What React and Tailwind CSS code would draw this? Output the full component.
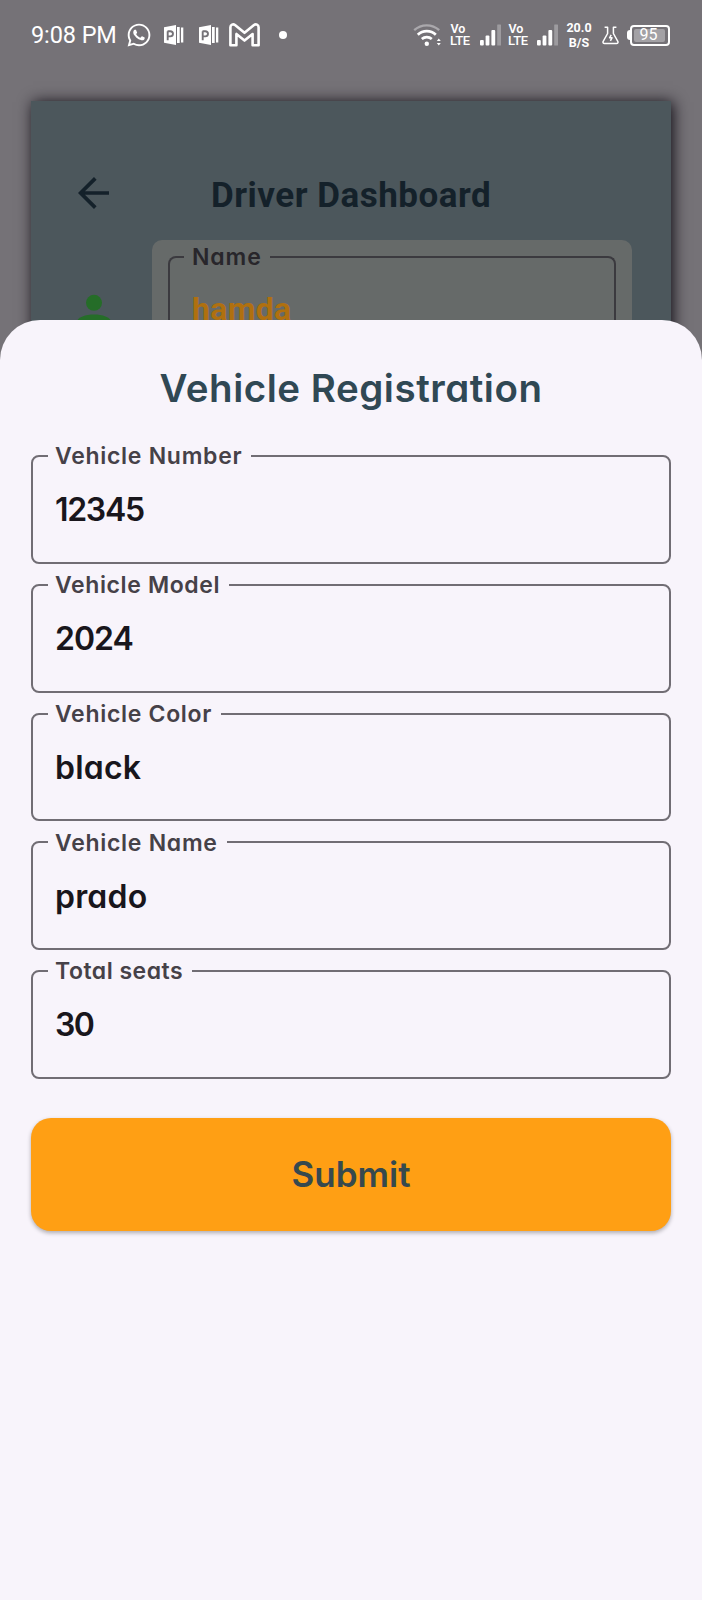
import React from "react";
import { FaWhatsapp } from "react-icons/fa";

const geo = "font-['Inter',sans-serif] [font-feature-settings:'cv11']";

function PublisherIcon() {
  return (
    <svg width="20" height="20" viewBox="0 0 20 20" fill="none" className="shrink-0">
      <path d="M0 2.300 12 0v20L0 17.700z" fill="#fff" />
      <path d="M3.700 15.200V6.200M3.500 6.200h2.700c3.700 0 3.700 5.200 0 5.200H3.900" stroke="#757277" strokeWidth="1.900" />
      <path d="M13 2h2.700v16H13zM17 2.400h2.300v15.200H17z" fill="#fff" />
    </svg>
  );
}

function GmailIcon() {
  return (
    <svg width="31" height="24" viewBox="0 0 31 24" fill="none" className="shrink-0">
      <path
        d="M1.400 22.300V4.200c0-2.600 2.800-3.600 4.600-2.200l9.500 7.800L25 2c1.800-1.400 4.600-.4 4.600 2.200v18.100h-6V11l-8.100 6.600L7.400 11v11.300z"
        stroke="#fff"
        strokeWidth="2.600"
        strokeLinejoin="round"
      />
    </svg>
  );
}

function WifiIcon() {
  return (
    <svg width="29" height="24" viewBox="0 0 29 24" fill="none" className="shrink-0">
      <path d="M1.200 7.200a18.500 18.500 0 0 1 25 0" stroke="#aaa8ac" strokeWidth="2.300" />
      <path d="M4.800 11.800a13 13 0 0 1 18 0" stroke="#fff" strokeWidth="2.700" />
      <path d="M8.800 16a7.600 7.600 0 0 1 10 0" stroke="#fff" strokeWidth="2.700" />
      <circle cx="13.800" cy="20.700" r="2.200" fill="#fff" />
      <path d="m25.800 15.400 2 2.600h-4zM25.800 22.600l2-2.600h-4z" fill="#fff" />
    </svg>
  );
}

function SignalIcon() {
  return (
    <svg width="21" height="22" viewBox="0 0 21 22" className="shrink-0">
      <rect x="0" y="16" width="3.800" height="5.500" rx="1" fill="#fff" />
      <rect x="5.600" y="11.500" width="3.800" height="10" rx="1" fill="#fff" />
      <rect x="11.400" y="6" width="3.800" height="15.500" rx="1" fill="#fff" />
      <rect x="17.200" y="0.500" width="3.800" height="21" rx="0.500" fill="#9d9b9f" />
    </svg>
  );
}

function VoLte() {
  return (
    <div className="flex w-5 shrink-0 flex-col items-center font-['Roboto',sans-serif] font-medium leading-[12px] text-white">
      <span className="-translate-x-0.5 text-[12.500px] font-semibold">Vo</span>
      <span className="text-[13px] tracking-[-0.300px]">LTE</span>
    </div>
  );
}

function FlaskIcon() {
  return (
    <svg width="17" height="19" viewBox="0 0 17 19" fill="none" stroke="#fff" strokeWidth="1.500" strokeLinejoin="round" className="shrink-0">
      <path d="M2.600 1.200h3v6.300L1.200 15.300c-.5 1.100 0 2.200 1.300 2.200h12c1.300 0 1.800-1.100 1.300-2.200L11.400 7.500V1.200h3" />
      <path d="M9.200 8.800 7.600 11.800h2.400l-1.600 3" />
    </svg>
  );
}

function StatusBar() {
  return (
    <header className="flex h-[70px] items-center pl-[31px] text-white">
      <span className="w-[87px] shrink-0 whitespace-nowrap font-['Roboto',sans-serif] text-[23.500px] leading-7 tracking-[-0.100px]">9:08 PM</span>
      <FaWhatsapp className="ml-[9px] h-[26px] w-[24px] shrink-0" />
      <span className="ml-[13px]"><PublisherIcon /></span>
      <span className="ml-[15px]"><PublisherIcon /></span>
      <span className="ml-[10px]"><GmailIcon /></span>
      <span className="ml-[19px] size-2 shrink-0 rounded-full bg-white" />
      <div className="ml-[126px] flex items-center">
        <WifiIcon />
        <div className="ml-2"><VoLte /></div>
        <div className="ml-[10px]"><SignalIcon /></div>
        <div className="ml-[7px]"><VoLte /></div>
        <div className="ml-[9px]"><SignalIcon /></div>
        <div className="ml-[7px] flex w-7 flex-col items-center font-['Roboto',sans-serif] text-[12.500px] font-bold leading-[15px]">
          <span>20.0</span>
          <span>B/S</span>
        </div>
        <div className="ml-[9px]"><FlaskIcon /></div>
        <div className="ml-[8px] flex items-center">
          <span className="h-2.5 w-[3px] rounded-l-sm bg-white" />
          <div className="flex h-[21px] w-10 rounded-[4px] border-2 border-white p-[2px]">
            <span className="flex w-[31px] items-center justify-center rounded-[2px] bg-[#a3a1a5] pr-0.5 font-['Roboto',sans-serif] text-base leading-none">95</span>
          </div>
        </div>
      </div>
    </header>
  );
}

function Dashboard() {
  return (
    <section className="mx-[31px] mt-[31px] h-[260px] bg-[#4c575c] shadow-[2px_1px_14px_0px_rgba(16,12,20,1)]">
      <div className="flex h-[139px] items-start pl-[47px] pt-[76px]">
        <svg width="32" height="32" viewBox="0 0 32 32" fill="none" stroke="#14212a" strokeWidth="3.700" className="shrink-0">
          <path d="M31 16H2.800M17.300 1.400 2.600 16l14.700 14.600" />
        </svg>
        <h2 className="ml-[101px] whitespace-nowrap font-['Roboto',sans-serif] text-[35px] font-bold leading-[38px] tracking-[0.500px] text-[#14212a]">Driver Dashboard</h2>
      </div>
      <div className="flex">
        <div className="w-[121px] shrink-0 pl-[46px] pt-[54px]">
          <svg width="34" height="34" viewBox="0 0 34 34" fill="#256d28">
            <circle cx="17" cy="8.800" r="8" />
            <path d="M0 34v-6c0-5 9-7.500 17-7.500S34 23 34 28v6z" />
          </svg>
        </div>
        <div className="h-[121px] w-[480px] rounded-t-[10px] bg-[#666a69] px-4 pt-4">
          <fieldset className="h-[105px] rounded-t-lg border-2 border-b-0 border-[#3b3a3f] pl-[14px]">
            <legend className="flex h-0.5 w-[86px] items-center pl-2">
              <span className={`${geo} whitespace-nowrap pt-px text-[23px] font-semibold tracking-[0.900px] text-[#28262b]`}>Name</span>
            </legend>
            <p className="pl-2 pt-8 font-['Roboto',sans-serif] text-[32px] font-bold leading-[38px] tracking-[0.300px] text-[#b0700f]">hamda</p>
          </fieldset>
        </div>
      </div>
    </section>
  );
}

const fields = [
  { label: "Vehicle Number", value: "12345", gap: "w-[203px]", track: "tracking-[0.720px]", valueTrack: "tracking-[-1.300px]" },
  { label: "Vehicle Model", value: "2024", gap: "w-[181px]", track: "tracking-[0.620px]", valueTrack: "tracking-[-1px]" },
  { label: "Vehicle Color", value: "black", gap: "w-[173px]", track: "tracking-[0.700px]", valueTrack: "tracking-[0.200px]" },
  { label: "Vehicle Name", value: "prado", gap: "w-[179px]", track: "tracking-[0.720px]", valueTrack: "tracking-[0.200px]" },
  { label: "Total seats", value: "30", gap: "w-[144px]", track: "tracking-[0.500px]", valueTrack: "tracking-[-1.500px]" },
];

function Field({ label, value, gap, track, valueTrack }) {
  return (
    <fieldset className="h-[108.750px] rounded-lg border-2 border-[#716d74] pl-[15px]">
      <legend className={`flex h-0.5 items-center pl-[7px] ${gap}`}>
        <span className={`${geo} ${track} whitespace-nowrap pt-px text-[23px] font-semibold text-[#464148]`}>{label}</span>
      </legend>
      <p className={`${geo} ${valueTrack} pl-[7px] pt-[33.400px] text-[32px] font-[630] leading-10 text-[#19161c]`}>{value}</p>
    </fieldset>
  );
}

export default function App() {
  return (
    <main className="h-[1600px] w-[702px] overflow-hidden bg-[#757277]">
      <StatusBar />
      <Dashboard />
      <section className="relative -mt-[41px] h-[1280px] rounded-t-[40px] bg-[#f8f4fb] px-[31px] pt-[41px]">
        <h1 className={`${geo} whitespace-nowrap text-center text-[38.500px] font-[620] leading-[54px] tracking-[0.520px] text-[#304854]`}>Vehicle Registration</h1>
        <form className="mt-10 flex flex-col gap-5" onSubmit={(e) => e.preventDefault()}>
          {fields.map((f) => (
            <Field key={f.label} {...f} />
          ))}
          <button className={`${geo} mt-[19px] h-[113px] rounded-[20px] bg-[#ff9f14] text-[35px] font-semibold text-[#36494e] shadow-[0_2px_4px_rgba(0,0,0,0.3)]`}>Submit</button>
        </form>
      </section>
    </main>
  );
}
